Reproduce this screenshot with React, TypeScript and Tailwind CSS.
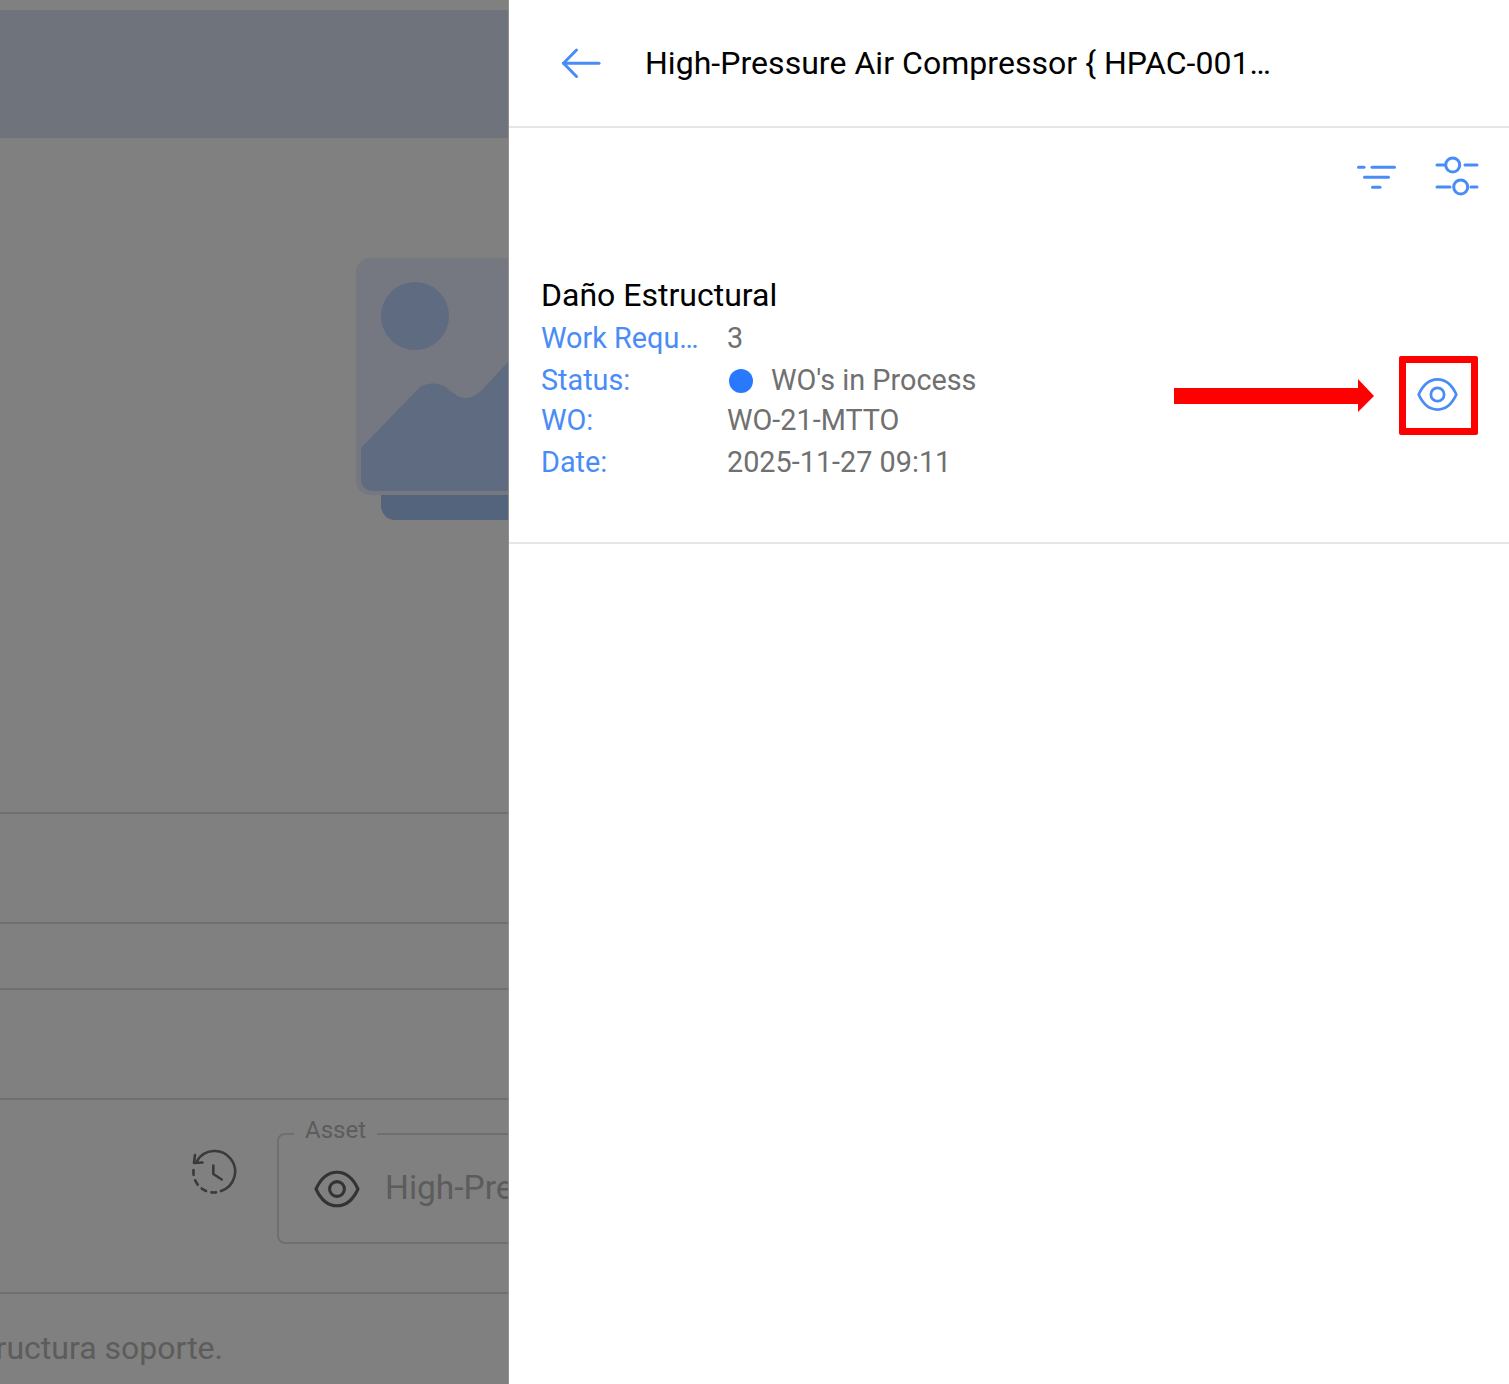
import React from 'react'

const blue = '#4a8cf7'

function BackArrow() {
  return (
    <svg width="40" height="32" viewBox="0 0 40 32" fill="none" stroke={blue} strokeWidth="3" strokeLinecap="round" strokeLinejoin="round">
      <path d="M2.500 16.300H38" />
      <path d="M15.500 3L2.500 16.300L15.500 29.500" />
    </svg>
  )
}

function FilterIcon() {
  return (
    <svg width="42" height="30" viewBox="0 0 42 30" fill="none" stroke={blue} strokeWidth="3" strokeLinecap="round">
      <path d="M3.500 5.300H9" />
      <path d="M17 5.300H39.500" />
      <path d="M9.500 15.300H33.500" />
      <path d="M17.500 25.300H25" />
    </svg>
  )
}

function SlidersIcon() {
  return (
    <svg width="46" height="42" viewBox="0 0 46 42" fill="none" stroke={blue} strokeWidth="3" strokeLinecap="round">
      <path d="M4 9H11" />
      <path d="M32 9H44" />
      <circle cx="19.700" cy="9" r="7" />
      <path d="M4 31H17" />
      <path d="M38 31H44" />
      <circle cx="27.700" cy="31" r="7" />
    </svg>
  )
}

function EyeIcon({ color, size }: { color: string; size: number }) {
  return (
    <svg width={size} height={size} viewBox="0 0 24 24" fill="none" stroke={color} strokeWidth="1.550" strokeLinecap="round" strokeLinejoin="round" className="shrink-0">
      <path d="M1.500 12C4 6.500 7.600 3.600 12 3.600S20 6.500 22.500 12C20 17.500 16.400 20.400 12 20.400S4 17.500 1.500 12Z" />
      <circle cx="12" cy="12" r="3.700" />
    </svg>
  )
}

function HistoryIcon() {
  return (
    <svg width="48" height="48" viewBox="0 0 48 48" fill="none" stroke="#3a3a3a" strokeWidth="2.600" strokeLinecap="round" strokeLinejoin="round" className="shrink-0">
      <path d="M7 13A20.500 20.500 0 1 1 31 43" />
      <path d="M5 7L4 15L12.500 14.500" />
      <path d="M3.500 22A20.500 20.500 0 0 0 26 44.400" strokeDasharray="5 5.500" />
      <path d="M23.300 17.500V26L31.700 31.500" />
    </svg>
  )
}

function ImagePlaceholder() {
  return (
    <svg width="300" height="262" viewBox="0 0 300 262" fill="none" className="shrink-0">
      <rect x="25" y="200" width="250" height="62" rx="14" fill="#55647d" />
      <rect x="0" y="0" width="300" height="237" rx="14" fill="#757881" />
      <circle cx="59" cy="58" r="34" fill="#5f6b80" />
      <path
        d="M5 190L63 130C70 124 84 124 91 130C98 136 103 140 110 140C116 140 122 136 128 130L160 95L295 170V222C295 229 290 233 285 233H18C10 233 5 228 5 222Z"
        fill="#5f6b80"
      />
    </svg>
  )
}

function InfoRow({ label, rowClass, children }: { label: string; rowClass: string; children: React.ReactNode }) {
  return (
    <div className={`flex items-center text-[28.8px] ${rowClass}`}>
      <span className="w-[186px] shrink-0 text-[#4a8cf7]">{label}</span>
      {children}
    </div>
  )
}

export default function App() {
  return (
    <div className="flex h-[1384px] w-[1509px] overflow-hidden bg-white font-['Roboto',sans-serif]">
      {/* dimmed page behind the drawer */}
      <div className="flex h-full w-[509px] shrink-0 flex-col overflow-hidden border-r border-[#8f8f8f] bg-[#808080] pt-[10px]">
        <div className="h-[128px] shrink-0 bg-[#6f737c]" />
        <div className="flex h-[674px] shrink-0 pl-[356px] pt-[120px]">
          <ImagePlaceholder />
        </div>
        <div className="h-[110px] shrink-0 border-t-2 border-[#6f6f6f]" />
        <div className="h-[66px] shrink-0 border-t-2 border-[#6f6f6f]" />
        <div className="h-[110px] shrink-0 border-t-2 border-[#6f6f6f]" />
        <div className="flex h-[194px] shrink-0 items-start border-t-2 border-[#6f6f6f] pl-[190px] pt-[48px]">
          <HistoryIcon />
          <div className="relative -mt-[15px] ml-[39px] flex h-[111px] w-[400px] shrink-0 items-center rounded-[8px] border-2 border-[#6f6f6f] pl-[34px]">
            <span className="absolute -top-[20px] left-[15px] bg-[#808080] px-[11px] text-[24px] leading-[30px] text-[#5c5c5c]">Asset</span>
            <EyeIcon color="#333333" size={48} />
            <span className="ml-[24px] text-[33.5px] text-[#5c5c5c]">High-Pressure</span>
          </div>
        </div>
        <div className="relative flex-1 border-t-2 border-[#6f6f6f]">
          <span className="absolute right-[285px] top-[32px] whitespace-nowrap text-[32px] leading-[44px] text-[#5c5c5c]">Estructura soporte.</span>
        </div>
      </div>

      {/* drawer */}
      <div className="flex min-w-0 flex-1 flex-col">
        <div className="flex h-[128px] shrink-0 items-center border-b-2 border-[#e5e5e5] pl-[52px]">
          <BackArrow />
          <div className="ml-[44px] w-[628px] truncate text-[32px] tracking-[0.04px] text-black">High-Pressure Air Compressor &#123; HPAC-001 &#125; - Planta</div>
        </div>
        <div className="flex h-[104px] shrink-0 items-start justify-end gap-[36px] pr-[30px] pt-[28px]">
          <div className="pt-[6px]">
            <FilterIcon />
          </div>
          <SlidersIcon />
        </div>
        <div className="flex h-[312px] shrink-0 items-start border-b-2 border-[#e5e5e5] pl-[32px] pt-[42px]">
          <div className="w-[632px] shrink-0">
            <div className="mb-[2px] text-[32px] leading-[42px] text-black">Daño Estructural</div>
            <InfoRow label="Work Requ…" rowClass="h-[42px]">
              <span className="text-[#707070]">3</span>
            </InfoRow>
            <InfoRow label="Status:" rowClass="h-[42px]">
              <span className="ml-[2px] h-[24px] w-[24px] rounded-full bg-[#2979ff]" />
              <span className="ml-[18px] text-[#707070]">WO's in Process</span>
            </InfoRow>
            <InfoRow label="WO:" rowClass="h-[38px]">
              <span className="text-[#707070]">WO-21-MTTO</span>
            </InfoRow>
            <InfoRow label="Date:" rowClass="h-[46px]">
              <span className="text-[#707070]">2025-11-27 09:11</span>
            </InfoRow>
          </div>
          <div className="ml-[1px] mt-[82px] flex items-center">
            <svg width="200" height="34" viewBox="0 0 200 34" fill="#ff0000" className="shrink-0">
              <path d="M0 9H184V0L200 17L184 33V25H0Z" />
            </svg>
            <div className="ml-[25px] flex h-[79px] w-[79px] items-center justify-center rounded-[2px] border-[7px] border-[#ff0000] pb-[3px] pr-[3px]">
              <EyeIcon color={blue} size={43} />
            </div>
          </div>
        </div>
      </div>
    </div>
  )
}
